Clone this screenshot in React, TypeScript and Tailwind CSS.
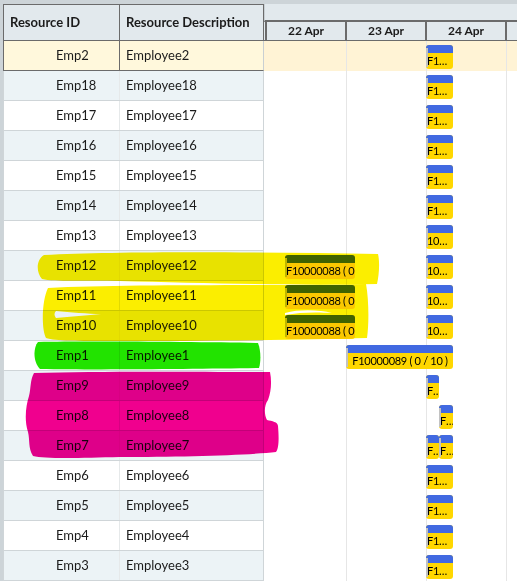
import React from 'react';

type Task = { left: number; width: number; label: string; center?: boolean; clip?: boolean };
type Resource = { id: string; desc: string; tasks: Task[] };

// bar positions are in px from the left edge of the timeline (x = 264)
const day24 = (label = 'F10000090'): Task => ({ left: 162, width: 27, label });
const day22 = (): Task => ({ left: 21, width: 70, label: 'F10000088 ( 0 / 10 )', clip: true });

const resources: Resource[] = [
  { id: 'Emp2', desc: 'Employee2', tasks: [day24()] },
  { id: 'Emp18', desc: 'Employee18', tasks: [day24()] },
  { id: 'Emp17', desc: 'Employee17', tasks: [day24()] },
  { id: 'Emp16', desc: 'Employee16', tasks: [day24()] },
  { id: 'Emp15', desc: 'Employee15', tasks: [day24()] },
  { id: 'Emp14', desc: 'Employee14', tasks: [day24()] },
  { id: 'Emp13', desc: 'Employee13', tasks: [day24('10000091')] },
  { id: 'Emp12', desc: 'Employee12', tasks: [day22(), day24('10000091')] },
  { id: 'Emp11', desc: 'Employee11', tasks: [day22(), day24('10000091')] },
  { id: 'Emp10', desc: 'Employee10', tasks: [day22(), day24('10000091')] },
  {
    id: 'Emp1',
    desc: 'Employee1',
    tasks: [{ left: 82, width: 107, label: 'F10000089 ( 0 / 10 )', center: true }],
  },
  { id: 'Emp9', desc: 'Employee9', tasks: [{ left: 162, width: 13, label: 'F10000092' }] },
  { id: 'Emp8', desc: 'Employee8', tasks: [{ left: 175, width: 14, label: 'F10000093' }] },
  {
    id: 'Emp7',
    desc: 'Employee7',
    tasks: [
      { left: 162, width: 13, label: 'F10000094' },
      { left: 175, width: 14, label: 'F10000095' },
    ],
  },
  { id: 'Emp6', desc: 'Employee6', tasks: [day24()] },
  { id: 'Emp5', desc: 'Employee5', tasks: [day24()] },
  { id: 'Emp4', desc: 'Employee4', tasks: [day24()] },
  { id: 'Emp3', desc: 'Employee3', tasks: [day24()] },
];

const days = ['22 Apr', '23 Apr', '24 Apr', ''];

function TaskBar({ task }: { task: Task }) {
  let textMode = 'text-ellipsis';
  if (task.center) textMode = 'text-center';
  if (task.clip) textMode = 'text-clip';
  return (
    <div
      className="absolute top-[4px] h-[24px] rounded-[3px] overflow-hidden bg-[#ffd700] flex flex-col"
      style={{ left: task.left, width: task.width }}
    >
      <div className="h-[8px] bg-[#4169e1] shrink-0" />
      <div
        className={`flex-1 text-[11px] leading-[16px] tracking-[-0.3px] text-black whitespace-nowrap overflow-hidden pl-[1px] ${textMode}`}
      >
        {task.label}
      </div>
      <div className="absolute left-0 top-[3px] bottom-[2px] w-[2px] bg-[#c2c2c2]" />
    </div>
  );
}

function TimelineColumns() {
  // light day separators behind the bars
  return (
    <div className="absolute inset-0 flex">
      <div className="w-[82px] shrink-0" />
      <div className="w-[80px] shrink-0 border-l border-[#e6e6e6]" />
      <div className="w-[80px] shrink-0 border-l border-[#e6e6e6]" />
      <div className="flex-1 border-l border-[#e6e6e6]" />
    </div>
  );
}

function Highlights() {
  // marker scribbles drawn over the screenshot
  return (
    <svg
      className="absolute inset-0 pointer-events-none mix-blend-multiply"
      width={517}
      height={581}
      viewBox="0 0 517 581"
    >
      <path
        fill="#fbee00"
        d="M44,255 C120,251 260,252 378,254 C380,262 379,276 377,284 C300,286 200,283 120,281 C85,280 55,282 42,279 C36,272 36,260 44,255 Z"
      />
      <path
        fill="#fbee00"
        fillRule="evenodd"
        d="M48,288 C120,284 250,286 366,284 C369,300 369,325 367,338 C300,340 200,341 110,341 C80,341 55,341 46,338 C41,328 42,300 48,288 Z M56,311 C70,312 88,314 101,314 C88,315 70,317 56,318 C54,315 54,313 56,311 Z M285,313 C300,309 320,310 332,313 C318,312 300,312 285,315 Z"
      />
      <path
        fill="#22e300"
        d="M38,342 C90,341 200,342 258,343 C261,350 261,362 259,368 C200,369 100,370 40,369 C33,362 33,348 38,342 Z"
      />
      <path
        fill="#f0008e"
        d="M34,373 C100,371 200,372 270,372 C272,382 271,392 268,400 C264,405 264,415 267,420 C272,421 278,422 278,426 C279,438 279,448 276,452 C250,455 180,457 120,457 C80,458 45,459 33,456 C28,448 30,440 28,432 C24,420 26,405 29,396 C31,388 30,380 34,373 Z"
      />
    </svg>
  );
}

export default function App() {
  return (
    <div
      className="relative w-[517px] h-[581px] overflow-hidden bg-[#cdd4d8] pt-[4px] pl-[3px] text-[#1b1b1b]"
      style={{ fontFamily: 'Lato, "Liberation Sans", sans-serif' }}
    >
      <div className="bg-white h-full flex flex-col">
        {/* header */}
        <div className="flex h-[37px] shrink-0">
          <div className="w-[261px] shrink-0 flex bg-[#e2e9ed] border border-[#6b6b6b] text-[13px] font-bold">
            <div className="w-[116px] shrink-0 flex items-center pl-[6px] border-r border-[#6b6b6b]">
              Resource ID
            </div>
            <div className="flex-1 flex items-center pl-[6px]">Resource Description</div>
          </div>
          <div className="flex-1 flex flex-col bg-[#e2e9ed] border-b border-[#6b6b6b]">
            <div className="h-[18px] border-b-2 border-[#6b6b6b] border-l border-l-[#c9d0d4]" />
            <div className="flex-1 flex text-[12px] font-bold">
              <div className="w-[1px] shrink-0" />
              {days.map((d, i) => (
                <div
                  key={i}
                  className="w-[80px] shrink-0 first:w-[81px] flex items-center justify-center border-l-2 border-[#6b6b6b]"
                >
                  {d}
                </div>
              ))}
            </div>
          </div>
        </div>

        {/* rows */}
        {resources.map((r, i) => {
          const selected = i === 0;
          const alt = i % 2 === 1;
          const leftBg = selected ? 'bg-[#fff8dc]' : alt ? 'bg-[#ecf3f6]' : 'bg-white';
          return (
            <div key={r.id} className="flex h-[30px] shrink-0">
              <div
                className={`w-[261px] shrink-0 flex text-[13px] border-r border-b ${leftBg} ${
                  selected
                    ? 'border-l border-[#6b6b6b] border-r-[#c9cfd2]'
                    : 'border-l border-[#cfd5d8]'
                }`}
              >
                <div
                  className={`w-[116px] shrink-0 flex items-center pl-[52px] border-r ${
                    selected ? 'border-[#6b6b6b]' : 'border-[#e6e9ea]'
                  }`}
                >
                  {r.id}
                </div>
                <div className="flex-1 flex items-center pl-[6px]">{r.desc}</div>
              </div>
              <div className={`flex-1 relative ${selected ? 'bg-[#fff3d5]' : 'bg-white'}`}>
                <TimelineColumns />
                {r.tasks.map((t, j) => (
                  <TaskBar key={j} task={t} />
                ))}
              </div>
            </div>
          );
        })}
      </div>
      <Highlights />
    </div>
  );
}
